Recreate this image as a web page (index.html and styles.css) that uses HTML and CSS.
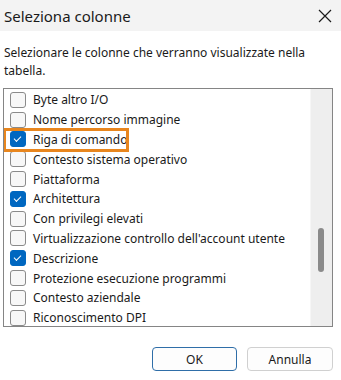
FILE: index.html
```html
<!DOCTYPE html>
<html>
<head>
  <title>Seleziona colonne</title>
  <link rel="stylesheet" href="styles.css">
</head>
<body>
  <div class="titlebar">
    <span class="title">Seleziona colonne</span>
    <svg class="close-icon" width="14" height="14" viewBox="0 0 14 14">
      <path d="M1 1 L13 13 M13 1 L1 13" stroke="#1a1a1a" stroke-width="1.2" fill="none"/>
    </svg>
  </div>
  <div class="content">
    <p class="intro">Selezionare le colonne che verranno visualizzate nella tabella.</p>
    <div class="listbox">
      <div class="items">
        <div class="row"><span class="box"></span>Byte altro I/O</div>
        <div class="row"><span class="box"></span>Nome percorso immagine</div>
        <div class="row"><span class="box checked"></span>Riga di comando</div>
        <div class="row"><span class="box"></span>Contesto sistema operativo</div>
        <div class="row"><span class="box"></span>Piattaforma</div>
        <div class="row"><span class="box checked"></span>Architettura</div>
        <div class="row"><span class="box"></span>Con privilegi elevati</div>
        <div class="row"><span class="box"></span>Virtualizzazione controllo dell'account utente</div>
        <div class="row"><span class="box checked"></span>Descrizione</div>
        <div class="row"><span class="box"></span>Protezione esecuzione programmi</div>
        <div class="row"><span class="box"></span>Contesto aziendale</div>
        <div class="row"><span class="box"></span>Riconoscimento DPI</div>
      </div>
      <div class="scrollbar"><div class="thumb"></div></div>
      <div class="highlight"></div>
    </div>
    <div class="buttons">
      <button class="btn primary">OK</button>
      <button class="btn">Annulla</button>
    </div>
  </div>
</body>
</html>
```
FILE: styles.css
```css
body {
  margin: 0;
  background: #ffffff;
  font-family: 'Noto Sans', 'Open Sans', sans-serif;
  font-size: 12px;
  color: #1a1a1a;
}
.titlebar {
  height: 31px;
  background: #f3f3f3;
  display: flex;
  align-items: center;
  justify-content: space-between;
  padding: 0 9px 0 4px;
}
.title {
  font-size: 15px;
  color: #1a1a1a;
}
.content {
  padding: 0 8px 0 3px;
}
.intro {
  margin: 13px 0 0 1px;
  line-height: 18px;
  height: 44px;
}
.listbox {
  position: relative;
  height: 237px;
  border: 1px solid #858585;
  display: flex;
  overflow: hidden;
}
.items {
  flex: 1;
  padding-top: 1px;
}
.row {
  height: 19.8px;
  display: flex;
  align-items: center;
  white-space: nowrap;
}
.box {
  width: 14px;
  height: 14px;
  margin: 0 7px 0 6px;
  border: 1px solid #8a8a8a;
  border-radius: 3px;
  background: #f7f7f7;
  flex: none;
}
.box.checked {
  background: #0067c0;
  border-color: #0067c0;
  position: relative;
}
.box.checked::after {
  content: '';
  position: absolute;
  left: 4px;
  top: 2px;
  width: 6px;
  height: 3px;
  border-left: 1.3px solid #fff;
  border-bottom: 1.3px solid #fff;
  transform: translate(-1px, 2px) rotate(-45deg);
}
.scrollbar {
  width: 21px;
  background: #eeeeee;
  border-left: 1px solid #f6f6f6;
  flex: none;
}
.thumb {
  width: 6px;
  height: 44px;
  margin: 139px 0 0 7px;
  background: #8a8a8a;
  border-radius: 3px;
}
.highlight {
  position: absolute;
  left: -1px;
  top: 39px;
  width: 120px;
  height: 18px;
  border: 3px solid #e8861e;
}
.buttons {
  display: flex;
  justify-content: flex-end;
  gap: 10px;
  margin-top: 20px;
}
.btn {
  height: 24px;
  width: 86px;
  font-family: 'Noto Sans', 'Open Sans', sans-serif;
  font-size: 12px;
  color: #1a1a1a;
  background: #fdfdfd;
  border: 1px solid #d0d0d0;
  border-radius: 4px;
  padding: 0;
}
.btn.primary {
  width: 85px;
  border-color: #2f6ea8;
}
```
